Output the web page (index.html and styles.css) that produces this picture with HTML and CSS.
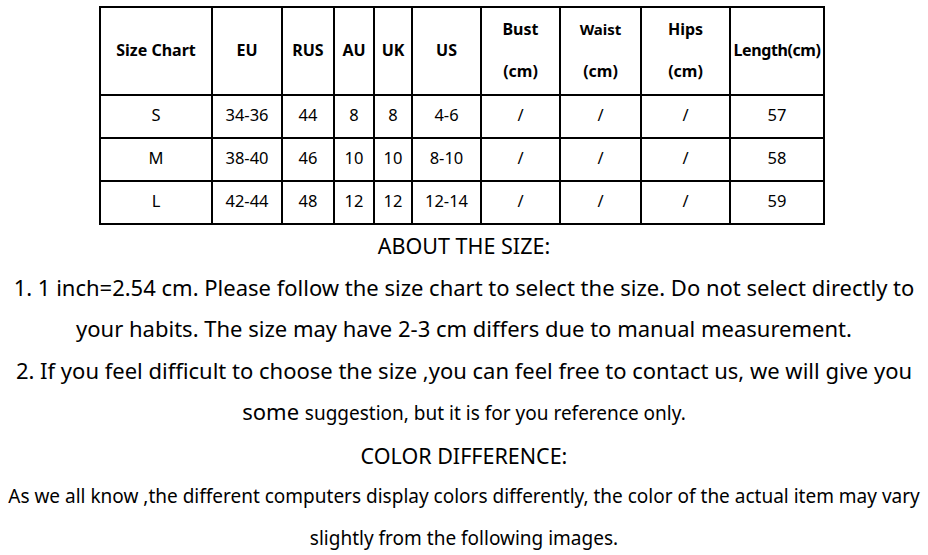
FILE: index.html
```html
<!DOCTYPE html>
<html>
<head>
<meta charset="utf-8">
<link rel="stylesheet" href="styles.css">
</head>
<body>
<div class="page">
  <table class="chart">
    <colgroup>
      <col class="c1"><col class="c2"><col class="c3"><col class="c4"><col class="c5">
      <col class="c6"><col class="c7"><col class="c8"><col class="c9"><col class="c10">
    </colgroup>
    <thead>
      <tr class="head">
        <th>Size Chart</th>
        <th>EU</th>
        <th>RUS</th>
        <th>AU</th>
        <th>UK</th>
        <th>US</th>
        <th class="two">Bust<br>(cm)</th>
        <th class="two small">Waist<br><span class="cm">(cm)</span></th>
        <th class="two">Hips<br>(cm)</th>
        <th class="len">Length(cm)</th>
      </tr>
    </thead>
    <tbody>
      <tr><td>S</td><td>34-36</td><td>44</td><td>8</td><td>8</td><td>4-6</td><td>/</td><td>/</td><td>/</td><td>57</td></tr>
      <tr><td>M</td><td>38-40</td><td>46</td><td>10</td><td>10</td><td>8-10</td><td>/</td><td>/</td><td>/</td><td>58</td></tr>
      <tr><td>L</td><td>42-44</td><td>48</td><td>12</td><td>12</td><td>12-14</td><td>/</td><td>/</td><td>/</td><td>59</td></tr>
    </tbody>
  </table>
  <div class="notes">
    <p class="title">ABOUT THE SIZE:</p>
    <p class="big">1. 1 inch=2.54 cm. Please follow the size chart to select the size. Do not select directly to<br>your habits. The size may have 2-3 cm differs due to manual measurement.</p>
    <p class="big">2. If you feel difficult to choose the size ,you can feel free to contact us, we will give you<br><span class="some">some</span> <span class="sm">suggestion, but it is for you reference only.</span></p>
    <p class="title">COLOR DIFFERENCE:</p>
    <p class="sm">As we all know ,the different computers display colors differently, the color of the actual item may vary<br>slightly from the following images.</p>
  </div>
</div>
</body>
</html>
```
FILE: styles.css
```css
html, body {
  margin: 0;
  padding: 0;
  background: #fff;
}
body {
  font-family: "Noto Sans", "Open Sans", sans-serif;
  color: #000;
}
.page {
  width: 928px;
  padding-top: 6px;
}
.chart {
  margin-left: 99px;
  border-collapse: collapse;
  table-layout: fixed;
  width: 726px;
  font-size: 16.5px;
}
.c1 { width: 112px; }
.c2 { width: 70px; }
.c3 { width: 52px; }
.c4 { width: 40px; }
.c5 { width: 38px; }
.c6 { width: 69px; }
.c7 { width: 79px; }
.c8 { width: 81px; }
.c9 { width: 89px; }
.c10 { width: 94px; }
.chart th, .chart td {
  border: 2px solid #000;
  text-align: center;
  vertical-align: middle;
  white-space: nowrap;
}
.chart th {
  font-weight: 700;
  font-size: 16px;
  height: 82px;
  padding: 0 0 2px;
  line-height: 42px;
}
.chart td {
  height: 38px;
  padding: 0 0 3px;
  line-height: 20px;
}
.chart th.small { font-size: 15px; }
.chart th.small .cm { font-size: 16px; }
.chart th.len { letter-spacing: -0.4px; }
.notes {
  text-align: center;
  line-height: 41.5px;
  margin-top: 0;
}
.notes p {
  margin: 0;
  white-space: nowrap;
}
.title { font-size: 21.5px; }
.big { font-size: 22px; }
.sm { font-size: 19px; }
.some { font-size: 22px; }
```
